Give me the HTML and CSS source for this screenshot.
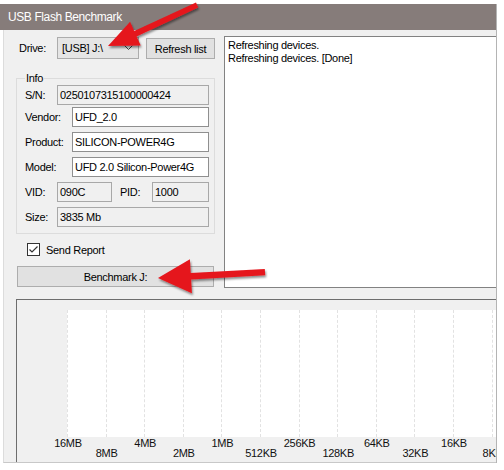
FILE: index.html
```html
<!DOCTYPE html>
<html>
<head>
<meta charset="utf-8">
<title>USB Flash Benchmark</title>
<link rel="stylesheet" href="styles.css">
</head>
<body>
<div class="window">
  <div class="titlebar">USB Flash Benchmark</div>
  <div class="client">
    <div class="top">
      <div class="left">
        <div class="drive-row">
          <span class="drive-label">Drive:</span>
          <div class="select">
            <span>[USB] J:\</span>
            <svg class="chev" width="9" height="6" viewBox="0 0 9 6"><path d="M0.5 0.5 L4.5 4.5 L8.5 0.5" fill="none" stroke="#444" stroke-width="1"/></svg>
          </div>
          <button class="btn refresh">Refresh list</button>
        </div>
        <fieldset class="info">
          <legend>Info</legend>
          <div class="row row-sn"><span class="lbl">S/N:</span><div class="field ro grow">0250107315100000424</div></div>
          <div class="row row-vendor"><span class="lbl wide">Vendor:</span><div class="field grow">UFD_2.0</div></div>
          <div class="row"><span class="lbl wide">Product:</span><div class="field grow">SILICON-POWER4G</div></div>
          <div class="row"><span class="lbl wide">Model:</span><div class="field grow">UFD 2.0 Silicon-Power4G</div></div>
          <div class="row"><span class="lbl">VID:</span><div class="field ro vid">090C</div><span class="lbl pid">PID:</span><div class="field ro grow">1000</div></div>
          <div class="row"><span class="lbl">Size:</span><div class="field ro grow">3835 Mb</div></div>
        </fieldset>
        <div class="check-row">
          <span class="checkbox"><svg width="11" height="11" viewBox="0 0 11 11"><path d="M1.5 5.5 L4 8 L9.5 2.5" fill="none" stroke="#333" stroke-width="1.2"/></svg></span>
          <span>Send Report</span>
        </div>
        <button class="btn bench">Benchmark J:</button>
      </div>
      <div class="log">
        <div>Refreshing devices.</div>
        <div>Refreshing devices. [Done]</div>
      </div>
    </div>
    <div class="chart">
      <div class="plot">
        <div class="col"><span class="tick up">16MB</span></div>
        <div class="col"><span class="tick down">8MB</span></div>
        <div class="col"><span class="tick up">4MB</span></div>
        <div class="col"><span class="tick down">2MB</span></div>
        <div class="col"><span class="tick up">1MB</span></div>
        <div class="col"><span class="tick down">512KB</span></div>
        <div class="col"><span class="tick up">256KB</span></div>
        <div class="col"><span class="tick down">128KB</span></div>
        <div class="col"><span class="tick up">64KB</span></div>
        <div class="col"><span class="tick down">32KB</span></div>
        <div class="col"><span class="tick up">16KB</span></div>
        <div class="col"><span class="tick down">8KB</span></div>
      </div>
    </div>
  </div>
</div>
<svg class="arrows" width="504" height="470" viewBox="0 0 504 470">
  <defs>
    <filter id="sh" x="-20%" y="-20%" width="140%" height="160%">
      <feDropShadow dx="1" dy="2" stdDeviation="1.2" flood-color="#000" flood-opacity="0.45"/>
    </filter>
  </defs>
  <polygon filter="url(#sh)" fill="#e5161d" points="108,46 140.7,45.6 136.6,36.4 198.2,7.5 196,2.5 134.2,31 130.1,21.8"/>
  <polygon filter="url(#sh)" fill="#e5161d" points="158,278 191.9,293.2 191.1,279.4 265.2,275.2 264.8,269 190.7,273 189.9,259.2"/>
</svg>
</body>
</html>
```
FILE: styles.css
```css
html, body {
  margin: 0;
  padding: 0;
}
body {
  position: relative;
  width: 504px;
  height: 470px;
  overflow: hidden;
  background: #fff;
  font-family: "Liberation Sans", Arial, sans-serif;
  font-size: 11px;
  letter-spacing: -0.3px;
  color: #000;
}
.window {
  margin-top: 4px;
  width: 496px;
  border-right: 1px solid #b4b4b4;
}
.titlebar {
  height: 26px;
  line-height: 26px;
  background: #867c7a;
  color: #fff;
  font-size: 12px;
  letter-spacing: -0.4px;
  padding-left: 8px;
}
.client {
  margin-left: 3px;
  border-left: 1px solid #dcdcdc;
  border-bottom: 1px solid #c8c8c8;
  background: #f0f0f0;
  height: 433px;
  box-sizing: border-box;
  padding: 6px 0 0 12px;
  display: flex;
  flex-direction: column;
}
.top {
  display: flex;
  height: 252px;
  flex: none;
}
.left {
  width: 199px;
  flex: none;
  display: flex;
  flex-direction: column;
}
.drive-row {
  margin-top: 1px;
  height: 22px;
  display: flex;
  align-items: center;
}
.drive-label {
  width: 41px;
  padding-left: 3px;
  box-sizing: border-box;
}
.select {
  width: 82px;
  height: 22px;
  box-sizing: border-box;
  border: 1px solid #acacac;
  background: #e5e5e5;
  display: flex;
  align-items: center;
  justify-content: space-between;
  padding: 0 5px 0 4px;
}
.btn {
  font: inherit;
  letter-spacing: inherit;
  color: #000;
  border: 1px solid #adadad;
  background: #e1e1e1;
  padding: 0;
  height: 21px;
  box-sizing: border-box;
}
.refresh {
  margin-left: 7px;
  width: 69px;
  align-self: flex-end;
}
.info {
  margin: 13px 0 0 0;
  padding: 0 5px 6px 8px;
  border: 1px solid #dcdcdc;
  width: 199px;
  min-width: 0;
  box-sizing: border-box;
}
.info legend {
  padding: 0 1px;
  line-height: 12px;
}
.row {
  display: flex;
  align-items: center;
  height: 20px;
  margin-top: 5px;
}
.row-sn {
  margin-top: 1px;
}
.row-vendor {
  margin-top: 2px;
}
.lbl {
  width: 32px;
  flex: none;
}
.lbl.wide {
  width: 47px;
}
.lbl.pid {
  margin-left: 8px;
}
.field {
  height: 20px;
  box-sizing: border-box;
  border: 1px solid #8f8f8f;
  background: #fff;
  padding-left: 2px;
  display: flex;
  align-items: center;
  white-space: nowrap;
}
.field.ro {
  background: #f0f0f0;
  border-color: #a8a8a8;
}
.grow {
  flex: 1;
}
.vid {
  width: 55px;
  flex: none;
}
.check-row {
  margin-top: 9px;
  height: 13px;
  display: flex;
  align-items: center;
  padding-left: 11px;
}
.checkbox {
  width: 13px;
  height: 13px;
  box-sizing: border-box;
  border: 1px solid #333;
  background: #fff;
  margin-right: 6px;
  display: flex;
}
.bench {
  margin-top: 10px;
  margin-left: 1px;
  width: 197px;
}
.log {
  margin-left: 9px;
  flex: 1;
  border: 1px solid #828282;
  border-right: none;
  background: #fff;
  padding: 2px 3px;
  line-height: 13px;
}
.chart {
  margin-top: 11px;
  flex: 1;
  border-top: 1px solid #6d6d6d;
  border-left: 1px solid #6d6d6d;
  overflow: hidden;
}
.plot {
  margin: 10px 0 0 50px;
  height: 127px;
  display: flex;
  background: #fff;
}
.col {
  flex: none;
  width: 38.6px;
  box-sizing: border-box;
  border-left: 1px dashed #e2e2e2;
  position: relative;
}
.tick {
  position: absolute;
  left: 0;
  transform: translateX(-50%);
  line-height: 12px;
  color: #111;
  white-space: nowrap;
}
.tick.up {
  top: 127px;
}
.tick.down {
  top: 137px;
}
.arrows {
  position: absolute;
  left: 0;
  top: 0;
  pointer-events: none;
}
```
